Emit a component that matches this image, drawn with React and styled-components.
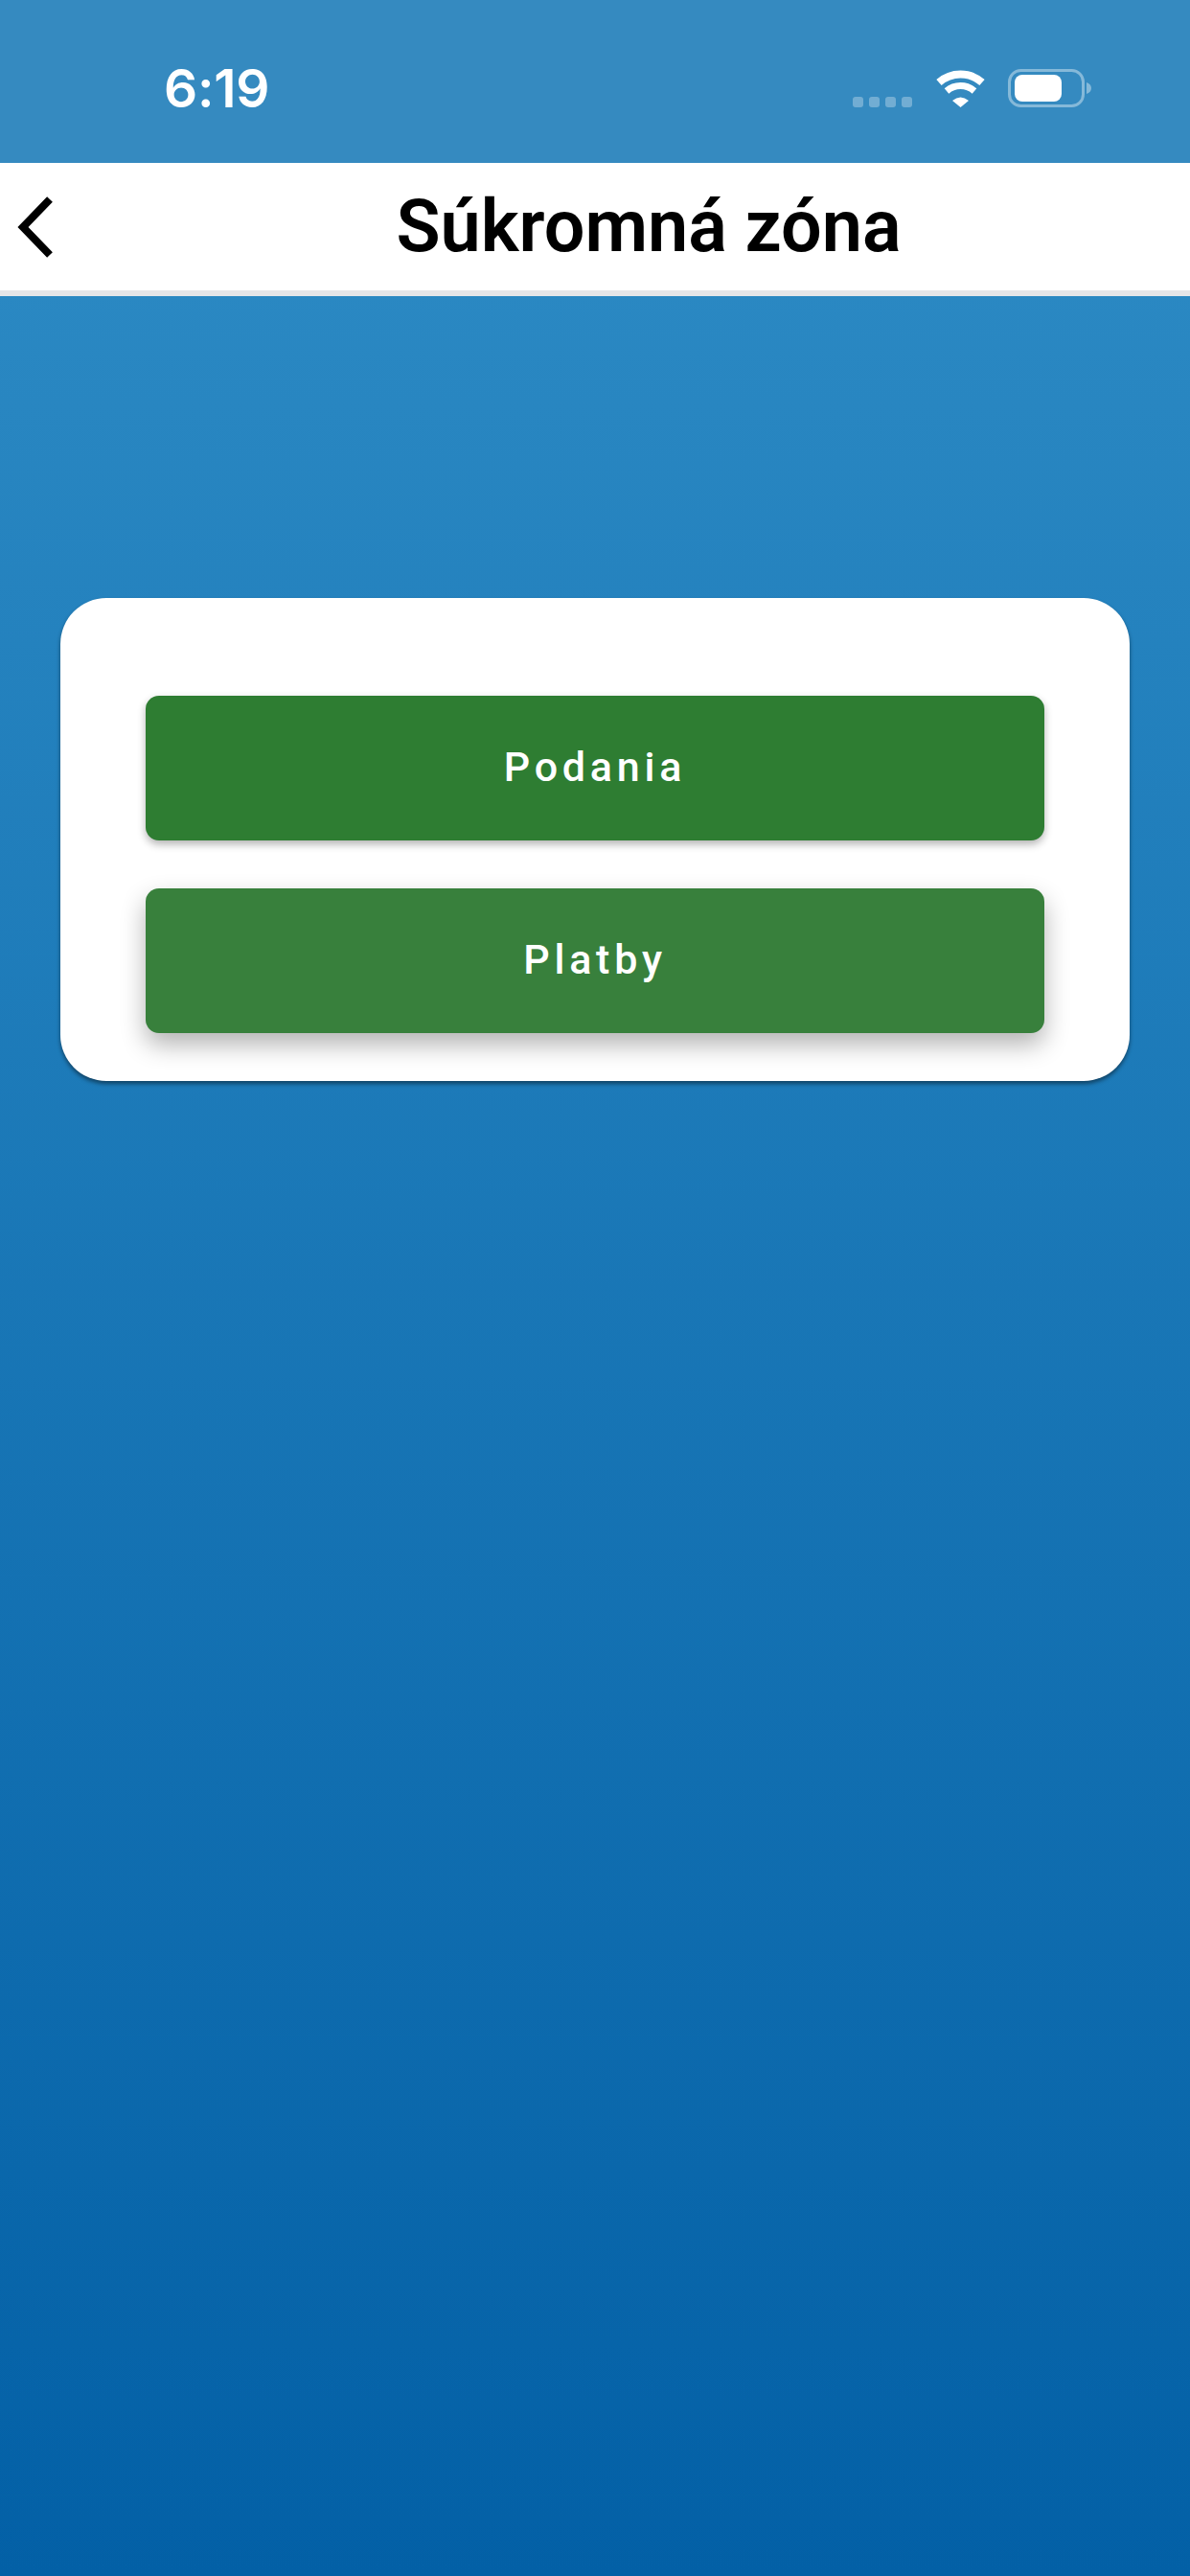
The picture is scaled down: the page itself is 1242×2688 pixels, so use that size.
import React from "react";
import styled, { createGlobalStyle } from "styled-components";

const GlobalStyle = createGlobalStyle`
  html, body {
    margin: 0;
    padding: 0;
  }
  body {
    font-family: "Inter", "Liberation Sans", sans-serif;
  }
`;

const Screen = styled.div`
  width: 1242px;
  height: 2688px;
  overflow: hidden;
  display: flex;
  flex-direction: column;
  background: linear-gradient(180deg, #2f8dc6 0%, #0360a6 100%);
`;

const StatusBar = styled.div`
  height: 170px;
  flex: none;
  box-sizing: border-box;
  display: flex;
  align-items: center;
  justify-content: space-between;
  padding: 14px 103px 0 171px;
  background: #358ac0;
`;

const Time = styled.span`
  color: #fff;
  font-size: 55px;
  font-weight: 600;
  letter-spacing: -0.2px;
  line-height: 40px;
`;

const StatusIcons = styled.div`
  display: flex;
  align-items: flex-end;
  height: 40px;
`;

const SignalDots = styled.div`
  display: flex;
  gap: 6px;
  margin-right: 24px;
`;

const SignalDot = styled.span`
  width: 11px;
  height: 11px;
  border-radius: 3px;
  background: rgba(255, 255, 255, 0.3);
`;

const WifiIcon = styled.svg`
  width: 53px;
  height: 39px;
  margin-right: 23px;
  display: block;
`;

const BatteryIcon = styled.svg`
  width: 87px;
  height: 40px;
  display: block;
`;

const Header = styled.header`
  height: 139px;
  flex: none;
  box-sizing: border-box;
  display: flex;
  align-items: center;
  background: #fff;
  border-bottom: 6px solid #e4e5e8;
`;

const BackButton = styled.button`
  width: 112px;
  height: 100%;
  flex: none;
  padding: 0 0 0 14px;
  border: 0;
  background: none;
  display: flex;
  align-items: center;
`;

const Title = styled.h1`
  flex: 1;
  margin: 0;
  text-align: center;
  color: #000;
  font-family: "Roboto", "Liberation Sans", sans-serif;
  font-size: 75.5px;
  font-weight: 600;
  line-height: 1;
`;

const Card = styled.section`
  margin: 315px 63px 0;
  padding: 102px 89px 50px;
  display: flex;
  flex-direction: column;
  gap: 50px;
  background: #fff;
  border-radius: 48px;
  box-shadow: 0 3px 4px rgba(0, 0, 0, 0.45);
`;

const ActionButton = styled.button`
  height: 151px;
  border: 0;
  border-radius: 14px;
  background: ${(p) => (p.$raised ? "#38803c" : "#2e7d32")};
  box-shadow: ${(p) =>
    p.$raised
      ? "0 12px 26px rgba(0, 0, 0, 0.3)"
      : "0 4px 8px rgba(0, 0, 0, 0.3)"};
  color: #fff;
  font-family: "Roboto", "Liberation Sans", sans-serif;
  font-size: 43px;
  font-weight: 460;
  letter-spacing: 4.8px;
  padding: 0 0 3px;
`;

export default function App() {
  return (
    <Screen>
      <GlobalStyle />
      <StatusBar>
        <Time>6:19</Time>
        <StatusIcons>
          <SignalDots>
            <SignalDot />
            <SignalDot />
            <SignalDot />
            <SignalDot />
          </SignalDots>
          <WifiIcon viewBox="0 0 53 39">
            <path d="M4 13A34 34 0 0 1 49 13" fill="none" stroke="#fff" strokeWidth="8" />
            <path d="M12 22A22 22 0 0 1 41 22" fill="none" stroke="#fff" strokeWidth="7" />
            <path d="M18 32Q26.5 25 35 32L26.5 39Z" fill="#fff" />
          </WifiIcon>
          <BatteryIcon viewBox="0 0 87 40">
            <rect x="1.5" y="1.5" width="77" height="37" rx="12" fill="none" stroke="#fff" strokeOpacity="0.4" strokeWidth="3" />
            <rect x="7" y="6" width="49" height="28" rx="8" fill="#fff" />
            <path d="M82 14C85 15 87 17 87 20C87 23 85 25 82 26Z" fill="#fff" fillOpacity="0.4" />
          </BatteryIcon>
        </StatusIcons>
      </StatusBar>
      <Header>
        <BackButton aria-label="Späť">
          <svg width="42" height="70" viewBox="0 0 42 70">
            <path d="M38 6L10 35L38 64" fill="none" stroke="#000" strokeWidth="8" />
          </svg>
        </BackButton>
        <Title>Súkromná zóna</Title>
      </Header>
      <Card>
        <ActionButton>Podania</ActionButton>
        <ActionButton $raised>Platby</ActionButton>
      </Card>
    </Screen>
  );
}
